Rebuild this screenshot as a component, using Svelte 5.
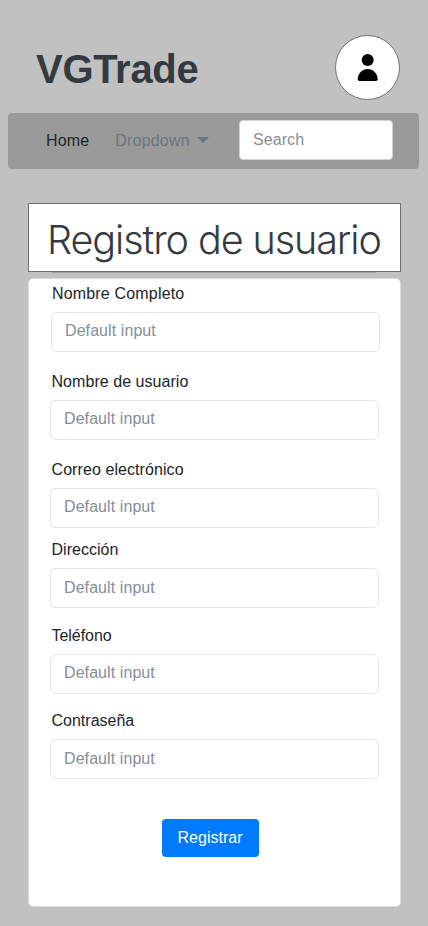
<script>
  const fields = [
    { id: 'nombre', label: 'Nombre Completo', gap: 0, shift: true, spacing: 0.17 },
    { id: 'usuario', label: 'Nombre de usuario', gap: 18, spacing: 0.05 },
    { id: 'correo', label: 'Correo electrónico', gap: 18, spacing: 0.08 },
    { id: 'direccion', label: 'Dirección', gap: 10, low: true, spacing: 0.03 },
    { id: 'telefono', label: 'Teléfono', gap: 16, spacing: -0.04 },
    { id: 'contrasena', label: 'Contraseña', gap: 15, low: true, spacing: 0 }
  ];
</script>

<div class="page">
  <header>
    <h1>VGTrade</h1>
    <button class="avatar" aria-label="Perfil">
      <svg width="63" height="63" viewBox="0 0 63 63">
        <circle cx="31.7" cy="24" r="6" />
        <path d="M21.700 43.300C21.700 37.500 26.200 33 31.700 33s10 4.500 10 10.300q0 1.700-1.700 1.700H23.400q-1.700 0-1.700-1.700Z" />
      </svg>
    </button>
  </header>

  <nav>
    <a class="home" href="#home">Home</a>
    <a class="dropdown" href="#dropdown">Dropdown<span class="caret"></span></a>
    <input class="search" type="text" placeholder="Search" aria-label="Search" />
  </nav>

  <main>
    <h2>Registro de usuario</h2>
    <div class="rule"></div>
    <form>
      {#each fields as f}
        <div class="field" class:shift={f.shift} class:low={f.low} style="margin-top: {f.gap}px">
          <label for={f.id} style="letter-spacing: {f.spacing}px">{f.label}</label>
          <input id={f.id} type="text" placeholder="Default input" />
        </div>
      {/each}
      <button class="submit" type="button">Registrar</button>
    </form>
  </main>
</div>

<style>
  :global(body) {
    background: #c1c1c1;
  }
  .page {
    box-sizing: border-box;
    width: 428px;
    height: 926px;
    overflow: hidden;
    padding-top: 35px;
    background: #c1c1c1;
    color: #212529;
    font: 16px/24px 'Liberation Sans', Arial, sans-serif;
  }
  .page * {
    box-sizing: border-box;
  }
  header {
    display: flex;
    justify-content: space-between;
    height: 78px;
    padding: 0 28px 0 36px;
  }
  h1 {
    margin: 10px 0 0;
    color: #343a40;
    font-size: 40px;
    font-weight: 700;
    line-height: 48px;
    letter-spacing: -0.3px;
  }
  .avatar {
    width: 65px;
    height: 65px;
    padding: 0;
    border: 1px solid #707070;
    border-radius: 50%;
    background: #fff;
  }
  .avatar svg {
    display: block;
  }
  nav {
    display: flex;
    align-items: center;
    width: 411px;
    height: 56px;
    margin-left: 8px;
    padding: 0 26px 0 38px;
    border-radius: 4px;
    background: #9a9a9a;
  }
  nav a {
    color: #212529;
    letter-spacing: 0.15px;
    text-decoration: none;
  }
  nav .dropdown {
    display: flex;
    align-items: center;
    margin-left: 26px;
    color: #6c757d;
    letter-spacing: 0.2px;
  }
  .caret {
    margin: 0 0 2px 7px;
    border: 6px solid transparent;
    border-top-color: #6c757d;
    border-bottom: 0;
  }
  input {
    display: block;
    width: 329px;
    height: 40px;
    margin: 0;
    padding: 0 13px 2px;
    border: 1px solid #e4e5e6;
    border-radius: 6px;
    outline: 0;
    background: #fff;
    font: inherit;
    letter-spacing: 0.08px;
  }
  .low input {
    padding-bottom: 0;
  }
  input::placeholder {
    color: #868e96;
    opacity: 1;
  }
  .search {
    width: 154px;
    margin: 0 0 2px auto;
    padding-bottom: 1px;
    border-color: #ced4da;
    border-radius: 4px;
  }
  main {
    width: 373px;
    margin: 34px 0 0 28px;
  }
  h2 {
    height: 69px;
    margin: 0;
    padding-left: 18px;
    border: 1px solid #707070;
    background: #fff;
    color: #343a40;
    font-family: Inter, 'Liberation Sans', sans-serif;
    font-size: 39.5px;
    font-weight: 300;
    line-height: 72px;
    letter-spacing: -1.08px;
    white-space: nowrap;
  }
  .rule {
    width: 324px;
    height: 1px;
    margin-left: 24px;
    background: #9aa2a6;
  }
  form {
    height: 629px;
    margin-top: 5px;
    padding: 3px 0 0 21px;
    border: 1px solid #dcdcdc;
    border-radius: 5px;
    background: #fff;
  }
  label {
    display: block;
    height: 30px;
    padding-left: 1.5px;
  }
  .shift {
    padding-left: 1px;
  }
  .shift label {
    padding-left: 1px;
  }
  .submit {
    display: block;
    width: 97px;
    height: 38px;
    margin: 40px 0 0 111.5px;
    padding: 0;
    border: 0;
    border-radius: 4px;
    background: #007bff;
    color: #fff;
    font: inherit;
  }
</style>
